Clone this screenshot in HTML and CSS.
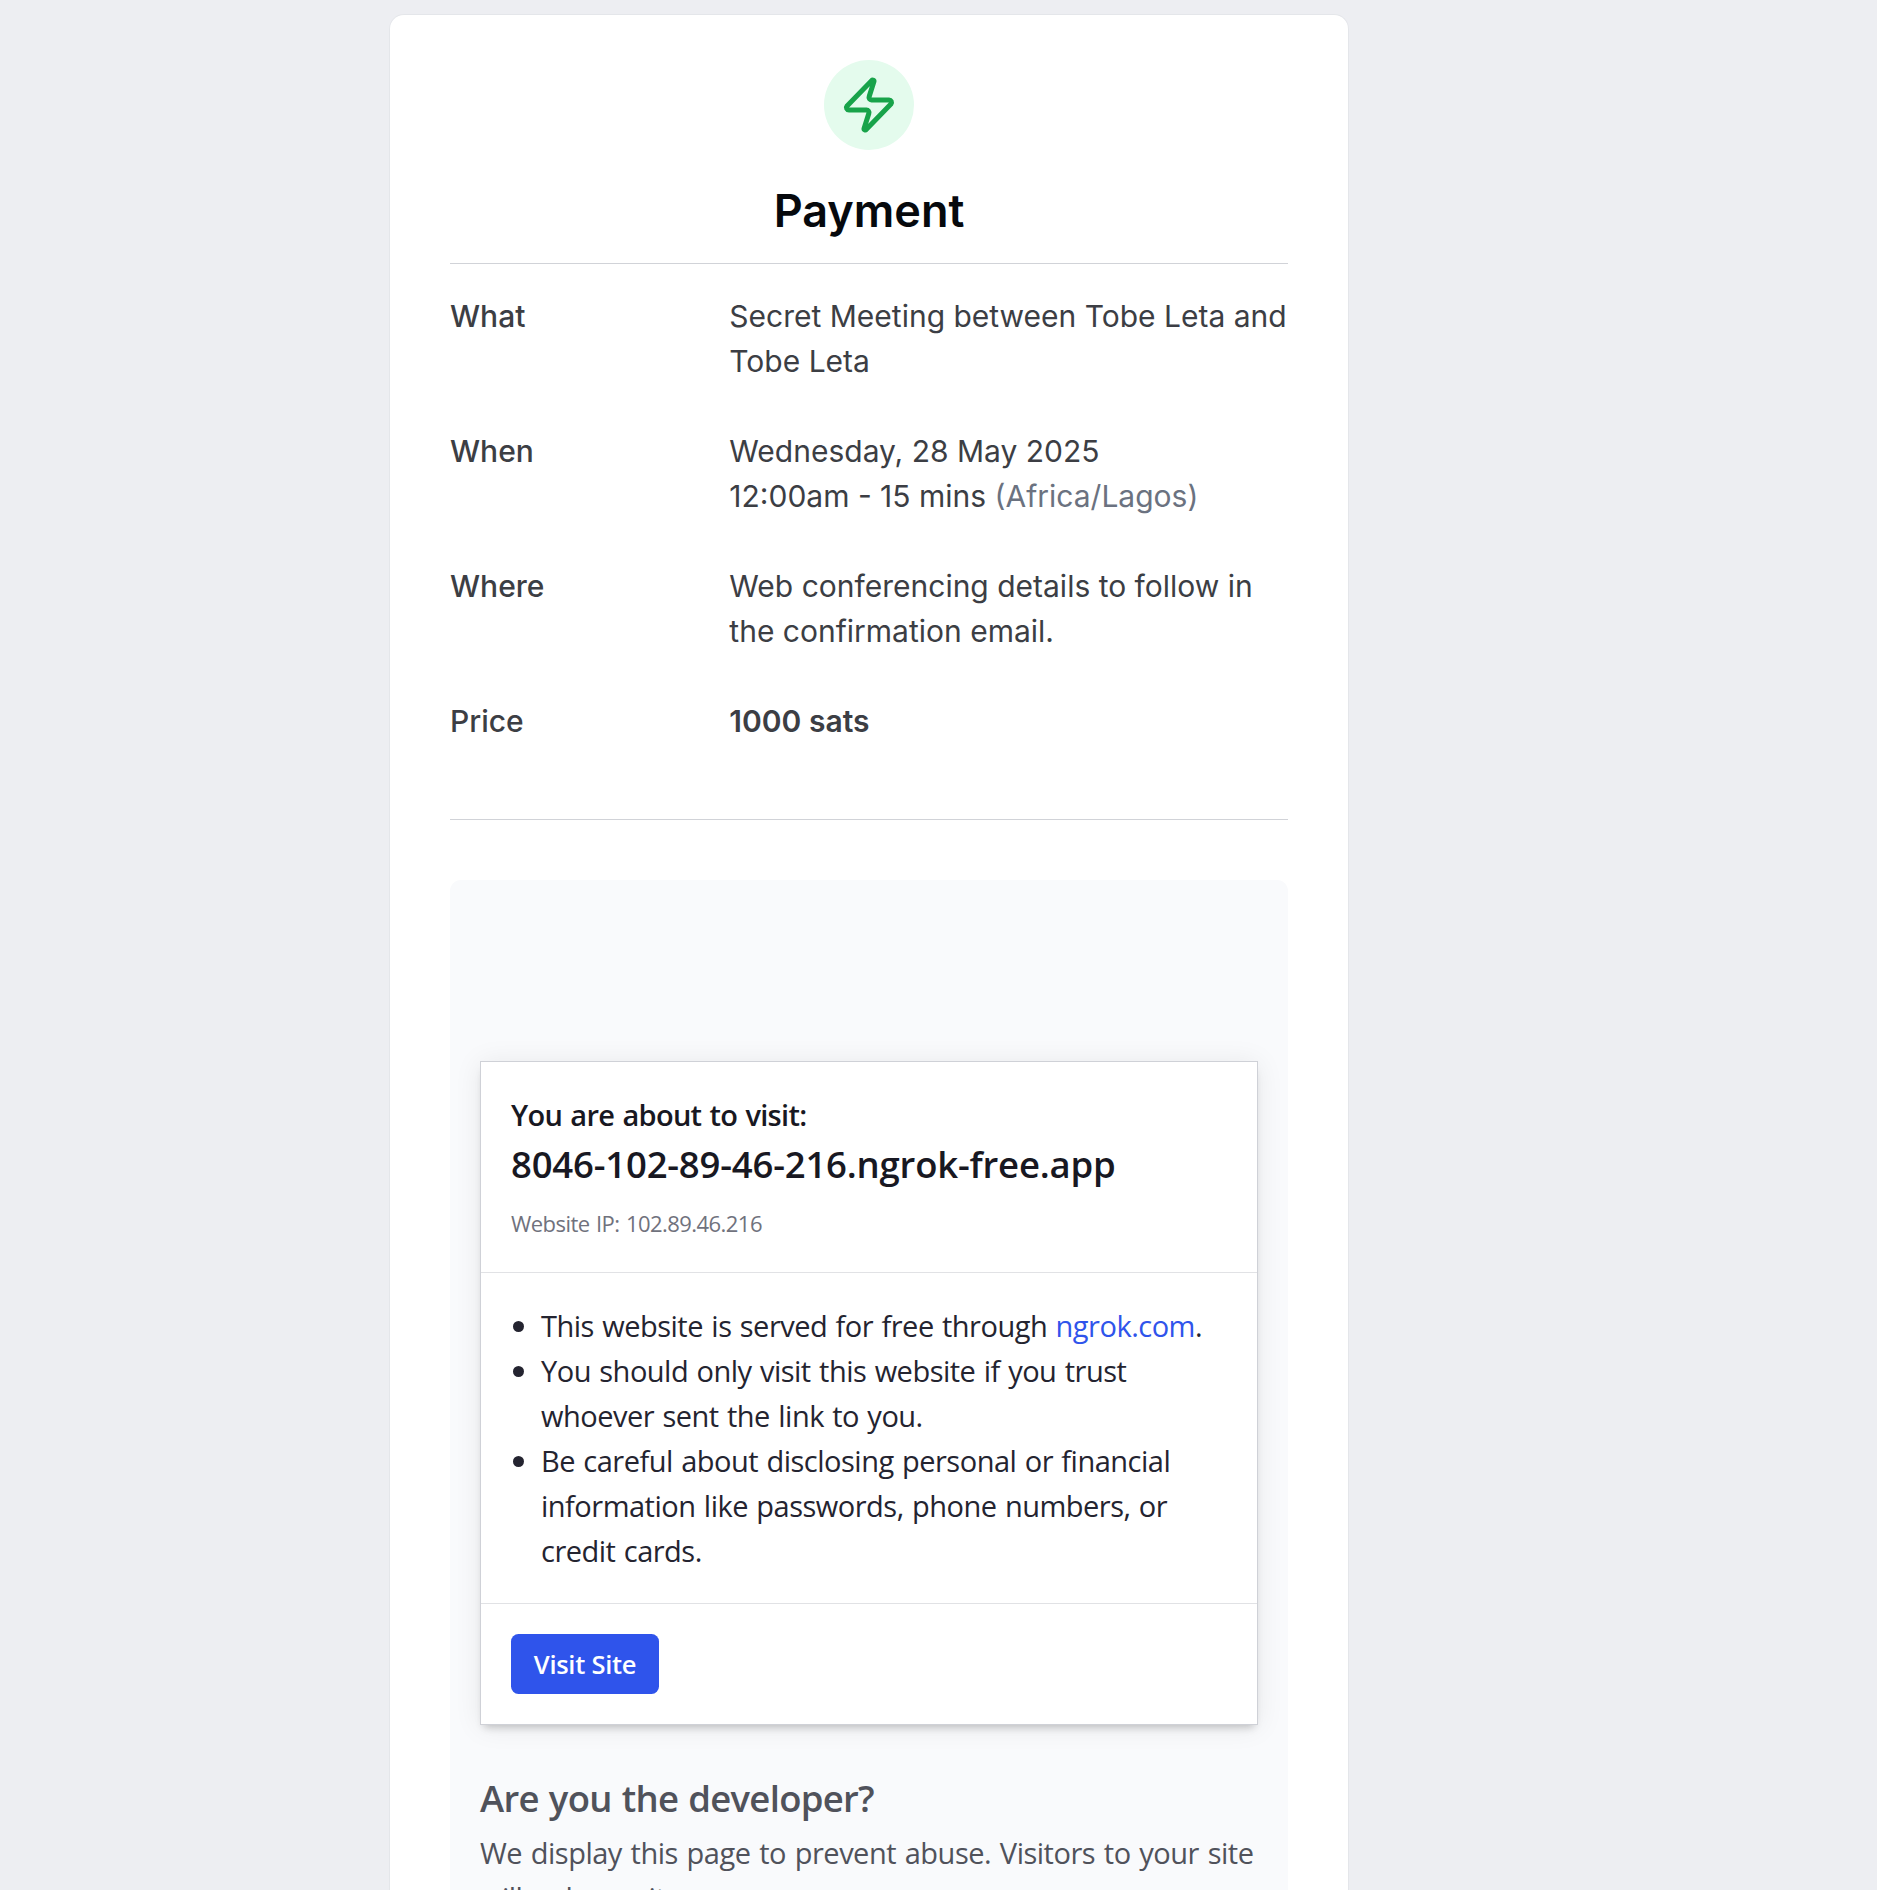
FILE: index.html
```html
<!DOCTYPE html>
<html lang="en">
<head>
<meta charset="utf-8">
<title>Payment</title>
<link rel="stylesheet" href="styles.css">
</head>
<body>
<main class="card">
  <div class="badge">
    <svg class="bolt" viewBox="0 0 24 24" fill="none" stroke="currentColor" stroke-width="2" stroke-linecap="round" stroke-linejoin="round"><path d="M4 14a1 1 0 0 1-.78-1.63l9.9-10.2a.5.5 0 0 1 .86.46l-1.92 6.02A1 1 0 0 0 13 10h7a1 1 0 0 1 .78 1.63l-9.9 10.2a.5.5 0 0 1-.86-.46l1.92-6.02A1 1 0 0 0 11 14z"/></svg>
  </div>
  <h1 class="title">Payment</h1>
  <dl class="details">
    <dt>What</dt>
    <dd>Secret Meeting between Tobe Leta and Tobe Leta</dd>
    <dt>When</dt>
    <dd>Wednesday, 28 May 2025<br>12:00am - 15 mins <span class="zone">(Africa/Lagos)</span></dd>
    <dt>Where</dt>
    <dd>Web conferencing details to follow in the confirmation email.</dd>
    <dt>Price</dt>
    <dd class="price">1000 sats</dd>
  </dl>
  <section class="panel">
    <div class="notice">
      <header class="notice-head">
        <p class="lead">You are about to visit:</p>
        <h2 class="host">8046-102-89-46-216.ngrok-free.app</h2>
        <p class="ip">Website IP: 102.89.46.216</p>
      </header>
      <ul class="warnings">
        <li>This website is served for free through <a class="link">ngrok.com</a>.</li>
        <li>You should only visit this website if you trust<br>whoever sent the link to you.</li>
        <li>Be careful about disclosing personal or financial<br>information like passwords, phone numbers, or<br>credit cards.</li>
      </ul>
      <footer class="notice-foot"><button class="visit">Visit Site</button></footer>
    </div>
    <h3 class="dev-title">Are you the developer?</h3>
    <p class="dev-text">We display this page to prevent abuse. Visitors to your site<br>will only see it once.</p>
  </section>
</main>
</body>
</html>
```
FILE: styles.css
```css
* { box-sizing: border-box; margin: 0; padding: 0; }
body {
  height: 1890px;
  overflow: hidden;
  padding-top: 14px;
  padding-left: 389px;
  background: #edeef2;
  font-family: "Inter", sans-serif;
  font-size: 30px;
  line-height: 45px;
  color: #3c3e44;
}
.card {
  width: 960px;
  height: 1876px;
  overflow: hidden;
  padding: 45px 60px 0;
  border: 1px solid #e4e6ea;
  border-bottom: 0;
  border-radius: 15px 15px 0 0;
  background: #fff;
}
.badge {
  display: flex;
  align-items: center;
  justify-content: center;
  width: 90px;
  height: 90px;
  margin: 0 auto;
  border-radius: 50%;
  background: #e4fbed;
  color: #18a34a;
}
.bolt { width: 60px; height: 60px; }
.title {
  margin-top: 34px;
  font-size: 45px;
  line-height: 54px;
  font-weight: 600;
  text-align: center;
  color: #06090d;
}
.details {
  display: grid;
  grid-template-columns: 1fr 2fr;
  row-gap: 45px;
  margin-top: 25px;
  padding: 30px 0 75px;
  border-top: 1px solid #d1d3d8;
  border-bottom: 1px solid #d1d3d8;
}
.details dt { font-weight: 500; }
.zone { color: #6b7280; }
.details .price { font-weight: 600; }
.panel {
  height: 1200px;
  margin-top: 60px;
  padding: 181px 30px 0;
  border-radius: 11px;
  background: #f9fafc;
  font-family: "Open Sans", "Noto Sans", sans-serif;
  font-size: 29px;
  letter-spacing: -0.5px;
  word-spacing: 1.3px;
}
.notice {
  border: 1px solid #cfd1d7;
  background: #fff;
  color: #242430;
  box-shadow: 0 6px 8px -4px rgba(0, 0, 0, .22), 0 2px 26px rgba(0, 0, 0, .08);
}
.notice-head {
  padding: 30px;
  border-bottom: 1px solid #e1e2e5;
}
.lead { font-weight: 600; letter-spacing: -0.7px; color: #181822; }
.host {
  padding-top: 1px;
  margin-bottom: 14px;
  font-size: 36.5px;
  line-height: 52.5px;
  font-weight: 600;
  letter-spacing: -0.19px;
  color: #181822;
}
.ip {
  font-size: 22px;
  line-height: 37.5px;
  letter-spacing: -0.55px;
  color: #70727d;
}
.warnings {
  padding: 30px;
  border-bottom: 1px solid #e1e2e5;
  list-style: none;
}
.warnings li { position: relative; padding-left: 30px; white-space: nowrap; }
.warnings li::before {
  content: "";
  position: absolute;
  left: 2px;
  top: 18px;
  width: 11px;
  height: 11px;
  border-radius: 50%;
  background: #242430;
}
.link { color: #2f54eb; }
.notice-foot { display: flex; padding: 30px; }
.visit {
  width: 148px;
  height: 60px;
  border: 0;
  border-radius: 7.5px;
  background: #2f54eb;
  color: #fff;
  font: 600 25.5px/60px "Open Sans", "Noto Sans", sans-serif;
  letter-spacing: -0.27px;
}
.dev-title {
  margin-top: 47px;
  font-size: 36.5px;
  line-height: 52.5px;
  font-weight: 600;
  letter-spacing: -0.72px;
  color: #50525b;
}
.dev-text {
  margin-top: 5px;
  word-spacing: 1.7px;
  white-space: nowrap;
  color: #50525b;
}
```
